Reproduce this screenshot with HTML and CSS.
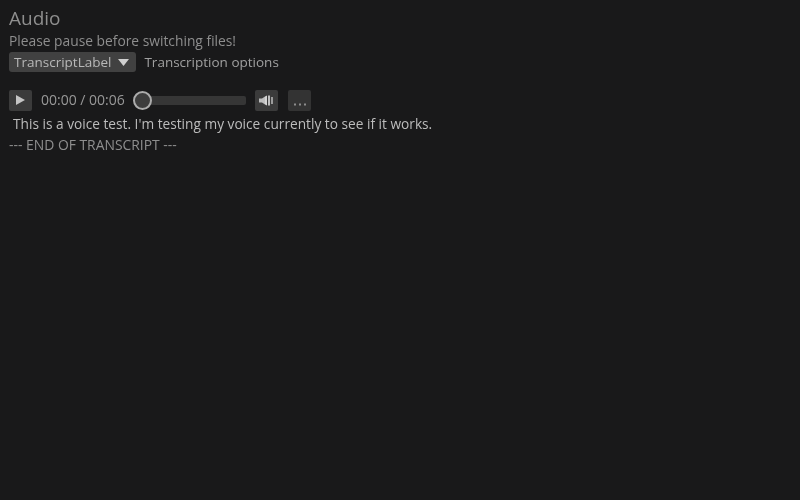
FILE: index.html
```html
<!DOCTYPE html>
<html lang="en">
<head>
<meta charset="utf-8">
<title>Audio</title>
<link rel="stylesheet" href="styles.css">
</head>
<body>
<main class="panel">
  <h1 class="title">Audio</h1>
  <p class="note">Please pause before switching files!</p>
  <div class="options">
    <div class="select"><span>TranscriptLabel</span><svg class="caret" width="11" height="7" viewBox="0 0 11 7"><path d="M0 0H11L5.5 7Z" fill="#d0d0d0"/></svg></div>
    <span class="options-label">Transcription options</span>
  </div>
  <div class="player">
    <button class="btn" aria-label="Play"><svg width="9" height="10" viewBox="0 0 9 10"><path d="M0 0V10L9 5Z" fill="#c4c4c4"/></svg></button>
    <span class="time">00:00 / 00:06</span>
    <div class="track"><div class="thumb"></div></div>
    <button class="btn vol" aria-label="Volume"><svg width="15" height="11" viewBox="0 0 15 11"><path d="M0 3.5H3L6 1.5V9.5L3 7.5H0Z" fill="#bdbdbd"/><path d="M6 1.5L8 0.5V10.5L6 9.5Z" fill="#d4d4d4"/><path d="M9 0.5H11V10.5H9Z" fill="#c0c0c0"/><path d="M12 2H14V9H12Z" fill="#9c9c9c"/></svg></button>
    <button class="btn more" aria-label="More"><svg width="12" height="3" viewBox="0 0 12 3"><path d="M0 0.5H2V2.5H0ZM5 0.5H7V2.5H5ZM10 0.5H12V2.5H10Z" fill="#8c8c8c"/></svg></button>
  </div>
  <p class="line">This is a voice test. I'm testing my voice currently to see if it works.</p>
  <p class="end">--- END OF TRANSCRIPT ---</p>
</main>
</body>
</html>
```
FILE: styles.css
```css
* { box-sizing: border-box; }
html, body { margin: 0; height: 100%; }
body {
  background: #19191a;
  color: #a2a2a2;
  font-family: "Open Sans", "Noto Sans", sans-serif;
  font-size: 13.5px;
  line-height: 20px;
}
.panel { padding: 8px 9px; filter: blur(0.35px); }
.title { margin: 0; font-size: 19px; font-weight: 400; line-height: 20px; color: #8e8e8e; }
.note { margin: 3px 0 0; height: 21px; font-size: 13.8px; color: #8e8e8e; }
.options { display: flex; align-items: center; gap: 8px; height: 20px; }
.select {
  display: flex; align-items: center; gap: 7px;
  height: 20px; padding: 0 7px 0 5px;
  background: #414141; border-radius: 3px; color: #b8b8b8;
}
.options-label { color: #a0a0a0; }
.player { display: flex; align-items: center; height: 22px; margin-top: 17px; color: #a0a0a0; }
.btn {
  display: flex; align-items: center; justify-content: center;
  width: 23px; height: 21px; padding: 0; border: 0;
  background: #3b3b3b; border-radius: 2px;
}
.time { margin-left: 9px; width: 84px; font-size: 14px; white-space: nowrap; color: #989898; }
.track {
  position: relative; width: 112px; height: 9px; margin-left: 9px;
  background: #363636; border-radius: 2px;
}
.thumb {
  position: absolute; left: -1px; top: -5px;
  width: 19px; height: 19px; border-radius: 50%;
  background: #3d3d3d; border: 2px solid #acacac;
}
.vol { margin-left: 9px; }
.more { margin-left: 10px; align-items: flex-end; padding-bottom: 5px; background: #333333; }
.line { margin: 3px 0 0 4px; font-size: 13.7px; color: #bcbcbc; }
.end { margin: 1px 0 0; font-size: 13.9px; color: #8e8e8e; }
```
